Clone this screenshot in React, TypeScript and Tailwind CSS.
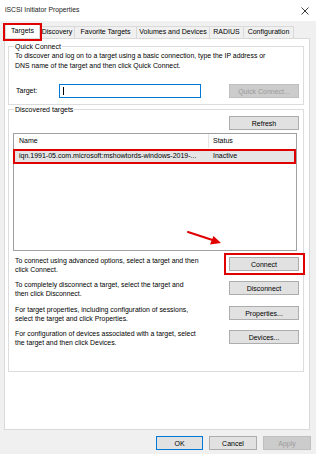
import React from 'react';

const font = { fontFamily: '"Liberation Sans", Arial, sans-serif' };

function Btn({ label, w = 'w-[70px]', disabled = false, blue = false }: { label: string; w?: string; disabled?: boolean; blue?: boolean }) {
  return (
    <div
      className={`${w} h-[14px] shrink-0 flex items-center justify-center text-[7px] leading-none border ${
        disabled
          ? 'bg-[#cccccc] border-[#bfbfbf] text-[#9a9a9a]'
          : blue
          ? 'bg-[#e1e1e1] border-[#0078d7] text-black'
          : 'bg-[#e1e1e1] border-[#adadad] text-black'
      }`}
    >
      {label}
    </div>
  );
}

function Group({ title, className, children }: { title: string; className: string; children: React.ReactNode }) {
  return (
    <div className={`relative border border-[#dcdcdc] ${className}`}>
      <span className="absolute left-[5px] -top-[5px] bg-white px-[1px] text-[7px] leading-[9px] text-black">{title}</span>
      {children}
    </div>
  );
}

function ActionRow({ lines, label, className, boxed = false }: { lines: string[]; label: string; className: string; boxed?: boolean }) {
  return (
    <div className={`flex items-start justify-between pl-[6px] pr-[4px] ${className}`}>
      <div className="text-[6.9px] leading-[8.5px] text-black">
        {lines.map((l) => (
          <div key={l}>{l}</div>
        ))}
      </div>
      <div className="relative">
        <Btn label={label} />
        {boxed && <div className="absolute -left-[5px] -top-[4px] w-[81px] h-[22px] border-[2px] border-[#e00000]" />}
      </div>
    </div>
  );
}

export default function App() {
  const tabs = [
    { t: 'Discovery', w: 'w-[36px]' },
    { t: 'Favorite Targets', w: 'w-[63px]' },
    { t: 'Volumes and Devices', w: 'w-[74px]' },
    { t: 'RADIUS', w: 'w-[35px]' },
    { t: 'Configuration', w: 'w-[51px]' },
  ];

  return (
    <div className="relative w-[316px] h-[454px] bg-[#f0f0f0] overflow-hidden text-black" style={font}>
      {/* Title bar */}
      <div className="h-[21px] bg-white flex items-center justify-between pl-[5px] pr-[7px]">
        <span className="text-[6.8px] text-[#222]">iSCSI Initiator Properties</span>
        <svg width="8" height="8" viewBox="0 0 8 8">
          <path d="M0.5 0.5 L7.5 7.5 M7.5 0.5 L0.5 7.5" stroke="#222" strokeWidth="0.9" />
        </svg>
      </div>

      {/* Tabs */}
      <div className="mt-[2px] h-[15px] pl-[5px] flex items-end">
        <div className="relative z-10 w-[35px] h-[15px] bg-white border border-b-0 border-[#d9d9d9] flex items-center justify-center text-[7px]">
          Targets
          <div className="absolute -left-[3px] -top-[1px] w-[39px] h-[18px] border-[2.5px] border-[#e00000]" />
        </div>
        {tabs.map((x) => (
          <div
            key={x.t}
            className={`${x.w} h-[12px] -ml-px bg-[#f0f0f0] border border-b-0 border-[#d9d9d9] flex items-center justify-center text-[7px] whitespace-nowrap`}
          >
            {x.t}
          </div>
        ))}
      </div>

      {/* Tab panel */}
      <div className="ml-[4px] w-[306px] h-[392px] bg-white border border-[#d9d9d9] pl-[3px] pr-[5px]">
        <Group title="Quick Connect" className="mt-[7px] h-[59px] pt-[4px]">
          <div className="pl-[6px] text-[6.9px] leading-[10px]">
            <div>To discover and log on to a target using a basic connection, type the IP address or</div>
            <div>DNS name of the target and then click Quick Connect.</div>
          </div>
          <div className="mt-[13px] flex items-center pl-[7px] pr-[4px]">
            <span className="w-[43px] text-[7px]">Target:</span>
            <div className="w-[142px] h-[14px] border border-[#0078d7] bg-white flex items-center pl-[3px]">
              <div className="w-px h-[8px] bg-black" />
            </div>
            <div className="flex-1" />
            <Btn label="Quick Connect..." disabled />
          </div>
        </Group>

        <Group title="Discovered targets" className="mt-[4px] h-[263px] pt-[6px]">
          <div className="flex justify-end pr-[4px]">
            <Btn label="Refresh" />
          </div>
          <div className="relative mt-[3px] ml-[4px] w-[284px] h-[118px] border border-[#a0a0a0] bg-white">
            <div className="flex h-[14px] items-center text-[7px]">
              <div className="w-[195px] pl-[5px] h-full flex items-center border-r border-[#e5e5e5]">Name</div>
              <div className="pl-[4px]">Status</div>
            </div>
            <div className="relative mt-[2px] h-[13px] bg-[#e5e5e5] flex items-center text-[7px]">
              <div className="w-[195px] pl-[5px] whitespace-nowrap">iqn.1991-05.com.microsoft:mshowtords-windows-2019-...</div>
              <div className="pl-[4px]">Inactive</div>
              <div className="absolute -left-[1px] -top-[1px] w-[283px] h-[15px] border-[2px] border-[#e00000]" />
            </div>
          </div>

          <ActionRow
            className="mt-[6px]"
            boxed
            label="Connect"
            lines={['To connect using advanced options, select a target and then', 'click Connect.']}
          />
          <ActionRow
            className="mt-[7px]"
            label="Disconnect"
            lines={['To completely disconnect a target, select the target and', 'then click Disconnect.']}
          />
          <ActionRow
            className="mt-[8px]"
            label="Properties..."
            lines={['For target properties, including configuration of sessions,', 'select the target and click Properties.']}
          />
          <ActionRow
            className="mt-[7px]"
            label="Devices..."
            lines={['For configuration of devices associated with a target, select', 'the target and then click Devices.']}
          />
        </Group>
      </div>

      {/* Dialog buttons */}
      <div className="mt-[6px] flex justify-end gap-[6px] pr-[5px]">
        <Btn label="OK" w="w-[47px]" blue />
        <Btn label="Cancel" w="w-[48px]" />
        <Btn label="Apply" w="w-[48px]" disabled />
      </div>

      {/* Red annotation arrow */}
      <svg className="absolute left-[185px] top-[228px]" width="40" height="20" viewBox="0 0 40 20">
        <path d="M3 4 L29 12.5" stroke="#e00000" strokeWidth="2" strokeLinecap="round" />
        <path d="M36 15 L25 16.5 L28.5 8 Z" fill="#e00000" />
      </svg>
    </div>
  );
}
